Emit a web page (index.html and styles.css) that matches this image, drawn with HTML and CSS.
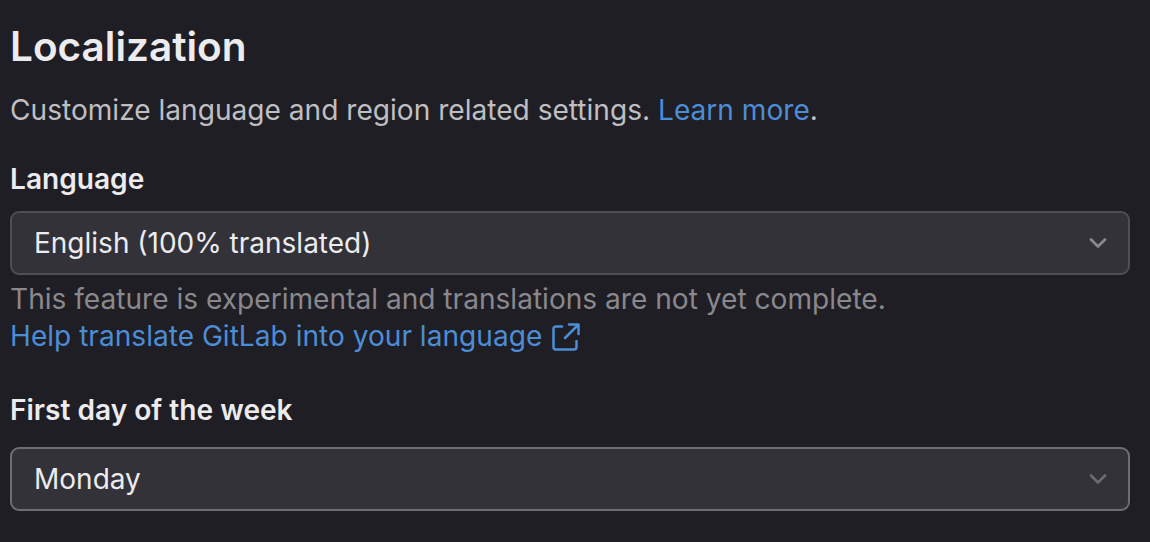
FILE: index.html
```html
<!DOCTYPE html>
<html lang="en">
<head>
<meta charset="utf-8">
<title>Localization</title>
<link rel="stylesheet" href="styles.css">
</head>
<body>
<main class="page">
  <h2 class="title">Localization</h2>
  <p class="lead">Customize language and region related settings. <a href="#" class="link">Learn more</a>.</p>
  <div class="field field-language">
    <div class="label">Language</div>
    <div class="select select-language">
      <span>English (100% translated)</span>
      <svg class="chevron" viewBox="0 0 16 16" width="28" height="28"><path d="M4 6l4 4 4-4" fill="none" stroke="currentColor" stroke-width="1.6" stroke-linecap="round" stroke-linejoin="round"/></svg>
    </div>
    <div class="help">This feature is experimental and translations are not yet complete.</div>
    <a href="#" class="link help-link">Help translate GitLab into your language
      <svg class="ext" viewBox="0 0 28 28" width="28" height="28"><path d="M10 3.5H4A2.5 2.5 0 0 0 1.5 6v18A2.5 2.5 0 0 0 4 26.5h18a2.5 2.5 0 0 0 2.5-2.5v-6M17 1.5h9.5V11M26 2L13 15" fill="none" stroke="currentColor" stroke-width="2.5" stroke-linecap="round" stroke-linejoin="round"/></svg>
    </a>
  </div>
  <div class="field field-week">
    <div class="label">First day of the week</div>
    <div class="select select-week">
      <span>Monday</span>
      <svg class="chevron" viewBox="0 0 16 16" width="28" height="28"><path d="M4 6l4 4 4-4" fill="none" stroke="currentColor" stroke-width="1.6" stroke-linecap="round" stroke-linejoin="round"/></svg>
    </div>
  </div>
</main>
</body>
</html>
```
FILE: styles.css
```css
html, body { margin: 0; height: 100%; }
body { background: #1f1e24; color: #ececef; font-family: Inter, "Liberation Sans", sans-serif; overflow: hidden; }
.page { padding: 24px 20px 0 10px; }
.title { margin: 0; font-size: 40.5px; line-height: 46px; font-weight: 600; color: #ececef; }
.lead { margin: 22px 0 0; font-size: 28.1px; line-height: 36px; color: #bfbfc3; }
.link { color: #4c8dd8; text-decoration: none; }
.field-language { margin-top: 34px; }
.field-week { margin-top: 38px; }
.label { font-size: 28.1px; line-height: 34px; font-weight: 600; color: #ececef; }
.select { height: 60px; border: 2px solid #6e6d73; border-radius: 9px; background: #333238; display: flex; align-items: center; justify-content: space-between; padding: 0 16px 0 22px; font-size: 28px; color: #ececef; }
.select-language { margin-top: 15px; border-color: #4f4e54; }
.select-language .chevron { color: #89888d; }
.select-week { margin-top: 20px; }
.select-week .chevron { color: #6b6a70; }
.help { margin-top: 6px; font-size: 28.1px; line-height: 37px; color: #89888d; }
.help-link { display: flex; align-items: center; gap: 10px; font-size: 28.1px; line-height: 37px; }
.ext { flex: none; }
```
